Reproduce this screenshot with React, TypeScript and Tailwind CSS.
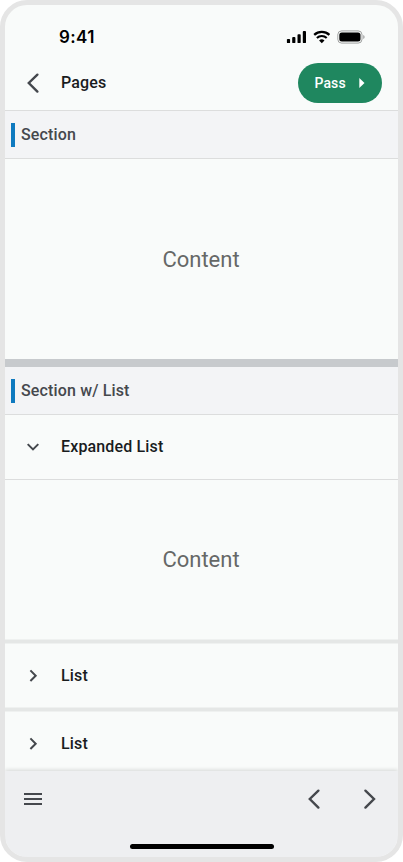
import type React from "react"

interface ListItem {
  id: string
  title: string
}

const items: ListItem[] = [
  { id: "1", title: "List" },
  { id: "2", title: "List" },
]

function Chevron({ direction }: { direction: "left" | "right" }) {
  return (
    <svg
      className="h-6 w-6"
      viewBox="0 0 24 24"
      fill="none"
      stroke="#45484d"
      strokeWidth="2.4"
      strokeLinecap="round"
    >
      <path d={direction === "left" ? "M16.4 3.7 7.8 12l8.6 8.6" : "M7.4 3.7l8.6 8.3-8.6 8.6"} />
    </svg>
  )
}

function SmallChevron({ open }: { open?: boolean }) {
  return (
    <svg className="h-6 w-6" viewBox="0 0 24 24" fill="none" stroke="#45484d" strokeWidth="2">
      <path d={open ? "M6.7 9.1l5.3 5.3 5.3-5.3" : "M9.4 6.4l5.3 5.3-5.3 5.3"} />
    </svg>
  )
}

function StatusBar() {
  return (
    <div className="flex h-[50px] items-start justify-between pr-[33px] pl-[54px]">
      <span className="pt-5 font-[Inter] text-[17px] leading-6 font-semibold tracking-[0.4px] text-black">9:41</span>
      <div className="flex pt-[25px]">
        <svg className="mr-1.5 h-3.5 w-[21px]" viewBox="0 0 21 14">
          <rect x="0.9" y="8.9" width="3.2" height="4.2" rx="0.9" />
          <rect x="6.2" y="7" width="3.2" height="6.1" rx="0.9" />
          <rect x="11.5" y="4.2" width="3.2" height="8.9" rx="0.9" />
          <rect x="16.8" y="1.1" width="3.2" height="12" rx="0.9" />
        </svg>
        <svg className="mr-1.5 h-3.5 w-[18px]" viewBox="0 0 18 14">
          <path d="M1.2 4.9a11.1 11.1 0 0 1 15.2 0" fill="none" stroke="#000" strokeWidth="2.3" />
          <path d="M3.9 8a7 7 0 0 1 9.8 0" fill="none" stroke="#000" strokeWidth="2.1" />
          <path d="M6.1 10.5a3.9 3.9 0 0 1 5.4 0L8.8 13.2z" />
        </svg>
        <svg className="h-3.5 w-7" viewBox="0 0 28 14">
          <rect x="0.8" y="0.9" width="24.2" height="12.2" rx="3.8" fill="none" stroke="#000" strokeOpacity="0.35" />
          <rect x="2.3" y="2.4" width="21.2" height="9.2" rx="2.5" />
          <path d="M26.3 5v4a2.2 2.2 0 0 0 0-4" fillOpacity="0.4" />
        </svg>
      </div>
    </div>
  )
}

function SectionHeader({ title }: { title: string }) {
  return (
    <div className="flex h-12 items-center border-b border-[#dcdddd] bg-[#f3f4f6] pl-1.5">
      <div className="h-6 w-1 bg-[#0f7abf]" />
      <h2 className="ml-1.5 text-base font-medium tracking-[0.15px] text-[#45484d]">{title}</h2>
    </div>
  )
}

function ListRow({ title, open }: { title: string; open?: boolean }) {
  return (
    <div className={`flex items-center pl-4 ${open ? "h-16" : "h-[63px]"}`}>
      <SmallChevron open={open} />
      <span className="ml-4 text-base font-medium tracking-[0.15px] text-[#191c1e]">{title}</span>
    </div>
  )
}

function Content({ className }: { className: string }) {
  return (
    <div className={`flex items-center justify-center pr-px text-[22px] leading-7 text-[#666867] ${className}`}>
      Content
    </div>
  )
}

export default function App(): React.ReactElement {
  return (
    <div className="h-[862px] w-[403px] bg-white font-[Roboto,sans-serif]">
      <div className="flex h-full flex-col overflow-hidden rounded-[27px] border-[5px] border-[#e5e5e5] bg-[#f9fbfa]">
        <header className="h-[106px] shrink-0 border-b border-[#dcdddd]">
          <StatusBar />
          <div className="flex h-14 items-center pr-4 pl-4">
            <Chevron direction="left" />
            <h1 className="ml-4 flex-1 text-base font-medium tracking-[0.15px] text-[#191c1e]">Pages</h1>
            <button className="flex h-10 w-[84px] items-center rounded-full bg-[#1f875f] pl-[16.5px] text-sm font-medium tracking-[0.1px] text-white">
              Pass
              <svg className="ml-[13.5px] h-2.5 w-1.5" viewBox="0 0 6 10" fill="#fff">
                <path d="M0.3 0v10l5.2-5z" />
              </svg>
            </button>
          </div>
        </header>

        <main className="flex min-h-0 flex-1 flex-col overflow-hidden">
          <section className="shrink-0 border-b-8 border-[#c7cacd]">
            <SectionHeader title="Section" />
            <Content className="h-[200px] pt-0.5" />
          </section>

          <section className="shrink-0">
            <SectionHeader title="Section w/ List" />
            <div className="border-b border-[#dcdddd]">
              <ListRow title="Expanded List" open />
            </div>
            <Content className="h-[159px] pt-px" />
            {items.map((item) => (
              <div key={item.id}>
                <div className="h-[5px] border-y border-[#eff1f0] bg-[#e5e7e6]" />
                <ListRow title={item.title} />
              </div>
            ))}
          </section>
        </main>

        <footer className="relative h-[86px] shrink-0 bg-[#eeeff1] shadow-[0_-1px_4px_rgba(0,0,0,0.15)]">
          <div className="flex h-14 items-center px-4">
            <svg className="h-6 w-6" viewBox="0 0 24 24" fill="#45484d">
              <path d="M3 6h18v2H3zM3 11h18v2H3zM3 16h18v2H3z" />
            </svg>
            <div className="ml-auto flex gap-8">
              <Chevron direction="left" />
              <Chevron direction="right" />
            </div>
          </div>
          <div className="mx-auto mt-[17px] h-[5px] w-36 rounded-full bg-black" />
        </footer>
      </div>
    </div>
  )
}
